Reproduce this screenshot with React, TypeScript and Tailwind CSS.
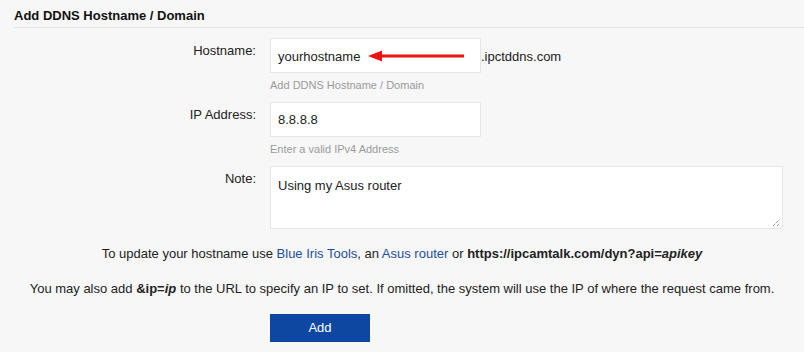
export default function App() {
  const font = { fontFamily: '"Liberation Sans", Arial, sans-serif' };
  return (
    <div className="w-[804px] h-[352px] bg-[#f7f7f7] text-[13px] text-[#222] overflow-hidden" style={font}>
      <div className="pl-[14px] pt-[8px]">
        <h2 className="font-bold text-[13px] leading-[16px] text-[#111] pb-[3px] border-b border-[#e4e4e4]">
          Add DDNS Hostname / Domain
        </h2>
      </div>

      <div className="mt-[10px] flex flex-col">
        {/* Hostname */}
        <div className="flex">
          <label className="w-[256px] text-right pt-[5px] leading-[16px]">Hostname:</label>
          <div className="ml-[14px] flex flex-col">
            <div className="flex items-center">
              <div className="relative w-[211px] h-[35px] bg-white border border-[#e6e6e6] flex items-center pl-[7px] pt-[3px]">
                yourhostname
                <svg className="absolute left-[97px] top-[11px]" width="97" height="12" viewBox="0 0 97 12">
                  <line x1="10" y1="6" x2="96" y2="6" stroke="#ee1111" strokeWidth="3" />
                  <polygon points="0,6 14,0.5 14,11.5" fill="#ee1111" />
                </svg>
              </div>
              <span className="pt-[3px]">.ipctddns.com</span>
            </div>
            <span className="text-[11px] text-[#9a9a9a] mt-[5px] leading-[14px]">Add DDNS Hostname / Domain</span>
          </div>
        </div>

        {/* IP */}
        <div className="flex mt-[10px]">
          <label className="w-[256px] text-right pt-[5px] leading-[16px]">IP Address:</label>
          <div className="ml-[14px] flex flex-col">
            <div className="w-[211px] h-[35px] bg-white border border-[#e6e6e6] flex items-center pl-[7px] pt-[1px]">8.8.8.8</div>
            <span className="text-[11px] text-[#9a9a9a] mt-[5px] leading-[14px]">Enter a valid IPv4 Address</span>
          </div>
        </div>

        {/* Note */}
        <div className="flex mt-[10px]">
          <label className="w-[256px] text-right pt-[5px] leading-[16px]">Note:</label>
          <div className="ml-[14px] relative w-[513px] h-[63px] bg-white border border-[#e6e6e6] pl-[7px] pt-[11px] leading-[16px]">
            Using my Asus router
            <svg className="absolute right-[1px] bottom-[1px]" width="9" height="9" viewBox="0 0 9 9">
              <line x1="1" y1="8" x2="8" y2="1" stroke="#666" strokeWidth="1" strokeDasharray="1 1" />
              <line x1="5" y1="8" x2="8" y2="5" stroke="#666" strokeWidth="1" strokeDasharray="1 1" />
            </svg>
          </div>
        </div>
      </div>

      <p className="text-center mt-[17px] leading-[16px]">
        To update your hostname use <span className="text-[#1c4fa0]">Blue Iris Tools</span>, an{" "}
        <span className="text-[#1c4fa0]">Asus router</span> or{" "}
        <b>https://ipcamtalk.com/dyn?api=<i>apikey</i></b>
      </p>
      <p className="text-center mt-[19px] leading-[16px]">
        You may also add <b>&amp;ip=<i>ip</i></b> to the URL to specify an IP to set. If omitted, the system will use the IP of where the request came from.
      </p>

      <div className="pl-[270px] mt-[17px]">
        <button className="w-[100px] h-[28px] bg-[#0d47a1] text-white text-[13px]">Add</button>
      </div>
    </div>
  );
}
